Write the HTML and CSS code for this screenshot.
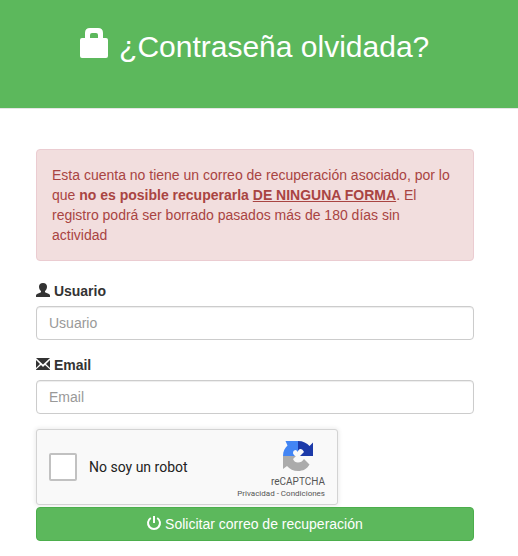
FILE: index.html
```
<!DOCTYPE html>
<html lang="es">
  <head>
    <meta charset="UTF-8">
    <meta name="viewport" content="width=device-width, initial-scale=1">
    <title>¿Contraseña olvidada?</title>
    <link rel="stylesheet" href="styles.css">
  </head>
  <body>
    <header class="header">
      <h2 class="title">
        <svg class="icon" viewBox="0 0 30 30" aria-hidden="true">
          <path fill-rule="evenodd" d="M4 10V5q0-5 5-5h8q5 0 5 5v5h3q2 0 2 2v16q0 2-2 2H1q-2 0-2-2V12q0-2 2-2zM9 10h8V7q0-2-2-2h-4q-2 0-2 2z"/>
        </svg>
        ¿Contraseña olvidada?
      </h2>
    </header>
    <main class="content">
      <div class="alert" role="alert">
        Esta cuenta no tiene un correo de recuperación asociado, por lo que <strong>no es posible recuperarla <u>DE NINGUNA FORMA</u></strong>. El registro podrá ser borrado pasados más de 180 días sin actividad
      </div>
      <form>
        <div class="form-group">
          <label for="username">
            <svg class="icon" viewBox="0 0 14 14" aria-hidden="true">
              <path d="M7 0c2.600 0 4 1.500 4 3.700 0 1.900-.8 3.500-2 4.400v1.200l4 1.600q1 .5 1 1.500V14H0v-1.600q0-1 1-1.500l4-1.600V8.100C3.800 7.200 3 5.600 3 3.700 3 1.500 4.400 0 7 0z"/>
            </svg>
            Usuario
          </label>
          <input class="form-control" id="username" type="text" placeholder="Usuario">
        </div>
        <div class="form-group">
          <label for="email">
            <svg class="icon" viewBox="0 0 14 14" aria-hidden="true">
              <path d="M0 1h14L7 7.500zM0 3l4 4-4 4zM14 3l-4 4 4 4zM5 8l2 2 2-2 5 4.500v.5H0v-.5z"/>
            </svg>
            Email
          </label>
          <input class="form-control" id="email" type="email" placeholder="Email">
        </div>
        <div class="captcha">
          <input class="captcha-check" id="robot" type="checkbox">
          <label class="captcha-label" for="robot">No soy un robot</label>
          <div class="captcha-info">
            <svg class="captcha-logo" viewBox="0 0 32 32" aria-hidden="true">
              <path fill="#1c3aa9" d="M16 1c5 0 9 2 11.500 5L31 2.500V16H18l4-4c-1-2-2-3-3.500-3-1 0-1.500.5-2.500 2z"/>
              <path fill="#4285f4" d="M16 1v11l-2-2c-2 0-3 1-3 3 0 1 1 2 2 3H1c0-5 2-8 4.500-10.500L3.500 1z"/>
              <path fill="#ababab" d="M1 16h13l-3 3c1 2.500 2.500 3.500 5 3.500 2.500 0 4.500-1 6-3.500l5.500 5.500C25 29 21 31 16 31c-4.500 0-8.500-2-11-5l-4 3z"/>
            </svg>
            <span class="captcha-brand">reCAPTCHA</span>
            <span class="captcha-links"><a href="#">Privacidad</a> - <a href="#">Condiciones</a></span>
          </div>
        </div>
        <button class="btn" type="submit">
          <svg class="icon" viewBox="0 0 14 14" aria-hidden="true">
            <path fill="none" stroke="currentColor" stroke-width="2" d="M3.800 2a6 6 0 1 0 6.400 0M7 0v7"/>
          </svg>
          Solicitar correo de recuperación
        </button>
      </form>
    </main>
  </body>
</html>
```

FILE: styles.css
```
* {
  box-sizing: border-box;
}
body {
  margin: 0;
  font-family: "Liberation Sans", Arial, sans-serif;
  font-size: 14px;
  line-height: 20px;
  color: #333;
  background: #fff;
}
.header {
  padding: 28px 44px 45px 36px;
  border-bottom: 1px solid #e5e5e5;
  background: #5cb85c;
  color: #fff;
  text-align: center;
}
.title {
  margin: 0;
  font-size: 30px;
  font-weight: 400;
  line-height: 33px;
}
.icon {
  display: inline-block;
  width: 1em;
  height: 1em;
  fill: currentColor;
  overflow: visible;
  vertical-align: -1px;
}
.content {
  padding: 40px 44px 15px 36px;
}
.alert {
  margin-bottom: 20px;
  padding: 15px;
  border: 1px solid #ebccd1;
  border-radius: 4px;
  background: #f2dede;
  color: #a94442;
}
.form-group {
  margin-bottom: 15px;
}
.form-group label {
  display: block;
  margin-bottom: 5px;
  font-weight: 700;
}
.form-control {
  display: block;
  width: 100%;
  height: 34px;
  padding: 6px 12px;
  border: 1px solid #ccc;
  border-radius: 4px;
  background: #fff;
  box-shadow: inset 0 1px 1px rgba(0, 0, 0, .075);
  color: #555;
  font: inherit;
}
.form-control::placeholder {
  color: #999;
}

/* Captcha */
.captcha {
  display: flex;
  align-items: center;
  max-width: 302px;
  height: 76px;
  margin-bottom: 2px;
  padding: 0 12px;
  border: 1px solid #d3d3d3;
  border-radius: 3px;
  background: #f9f9f9;
  box-shadow: 0 0 4px 1px rgba(0, 0, 0, .08);
  font-family: Roboto, Arial, sans-serif;
}
.captcha-check {
  appearance: none;
  width: 28px;
  height: 28px;
  margin: 0 12px 0 0;
  border: 2px solid #c1c1c1;
  border-radius: 2px;
  background: #fff;
}
.captcha-check:checked {
  background: #5cb85c;
}
.captcha-label {
  color: #222;
}
.captcha-info {
  display: flex;
  flex-direction: column;
  align-items: flex-end;
  margin-left: auto;
  padding-top: 6px;
  color: #555;
}
.captcha-logo {
  width: 32px;
  height: 32px;
  margin-right: 11px;
}
.captcha-brand {
  margin-top: 4px;
  font-size: 10px;
  line-height: 12px;
}
.captcha-links {
  font-size: 8px;
  line-height: 12px;
}
.captcha-links a {
  color: inherit;
  text-decoration: none;
}

.btn {
  display: block;
  width: 100%;
  padding: 6px 12px;
  border: 1px solid #4cae4c;
  border-radius: 4px;
  background: #5cb85c;
  color: #fff;
  font: inherit;
  cursor: pointer;
}
```
